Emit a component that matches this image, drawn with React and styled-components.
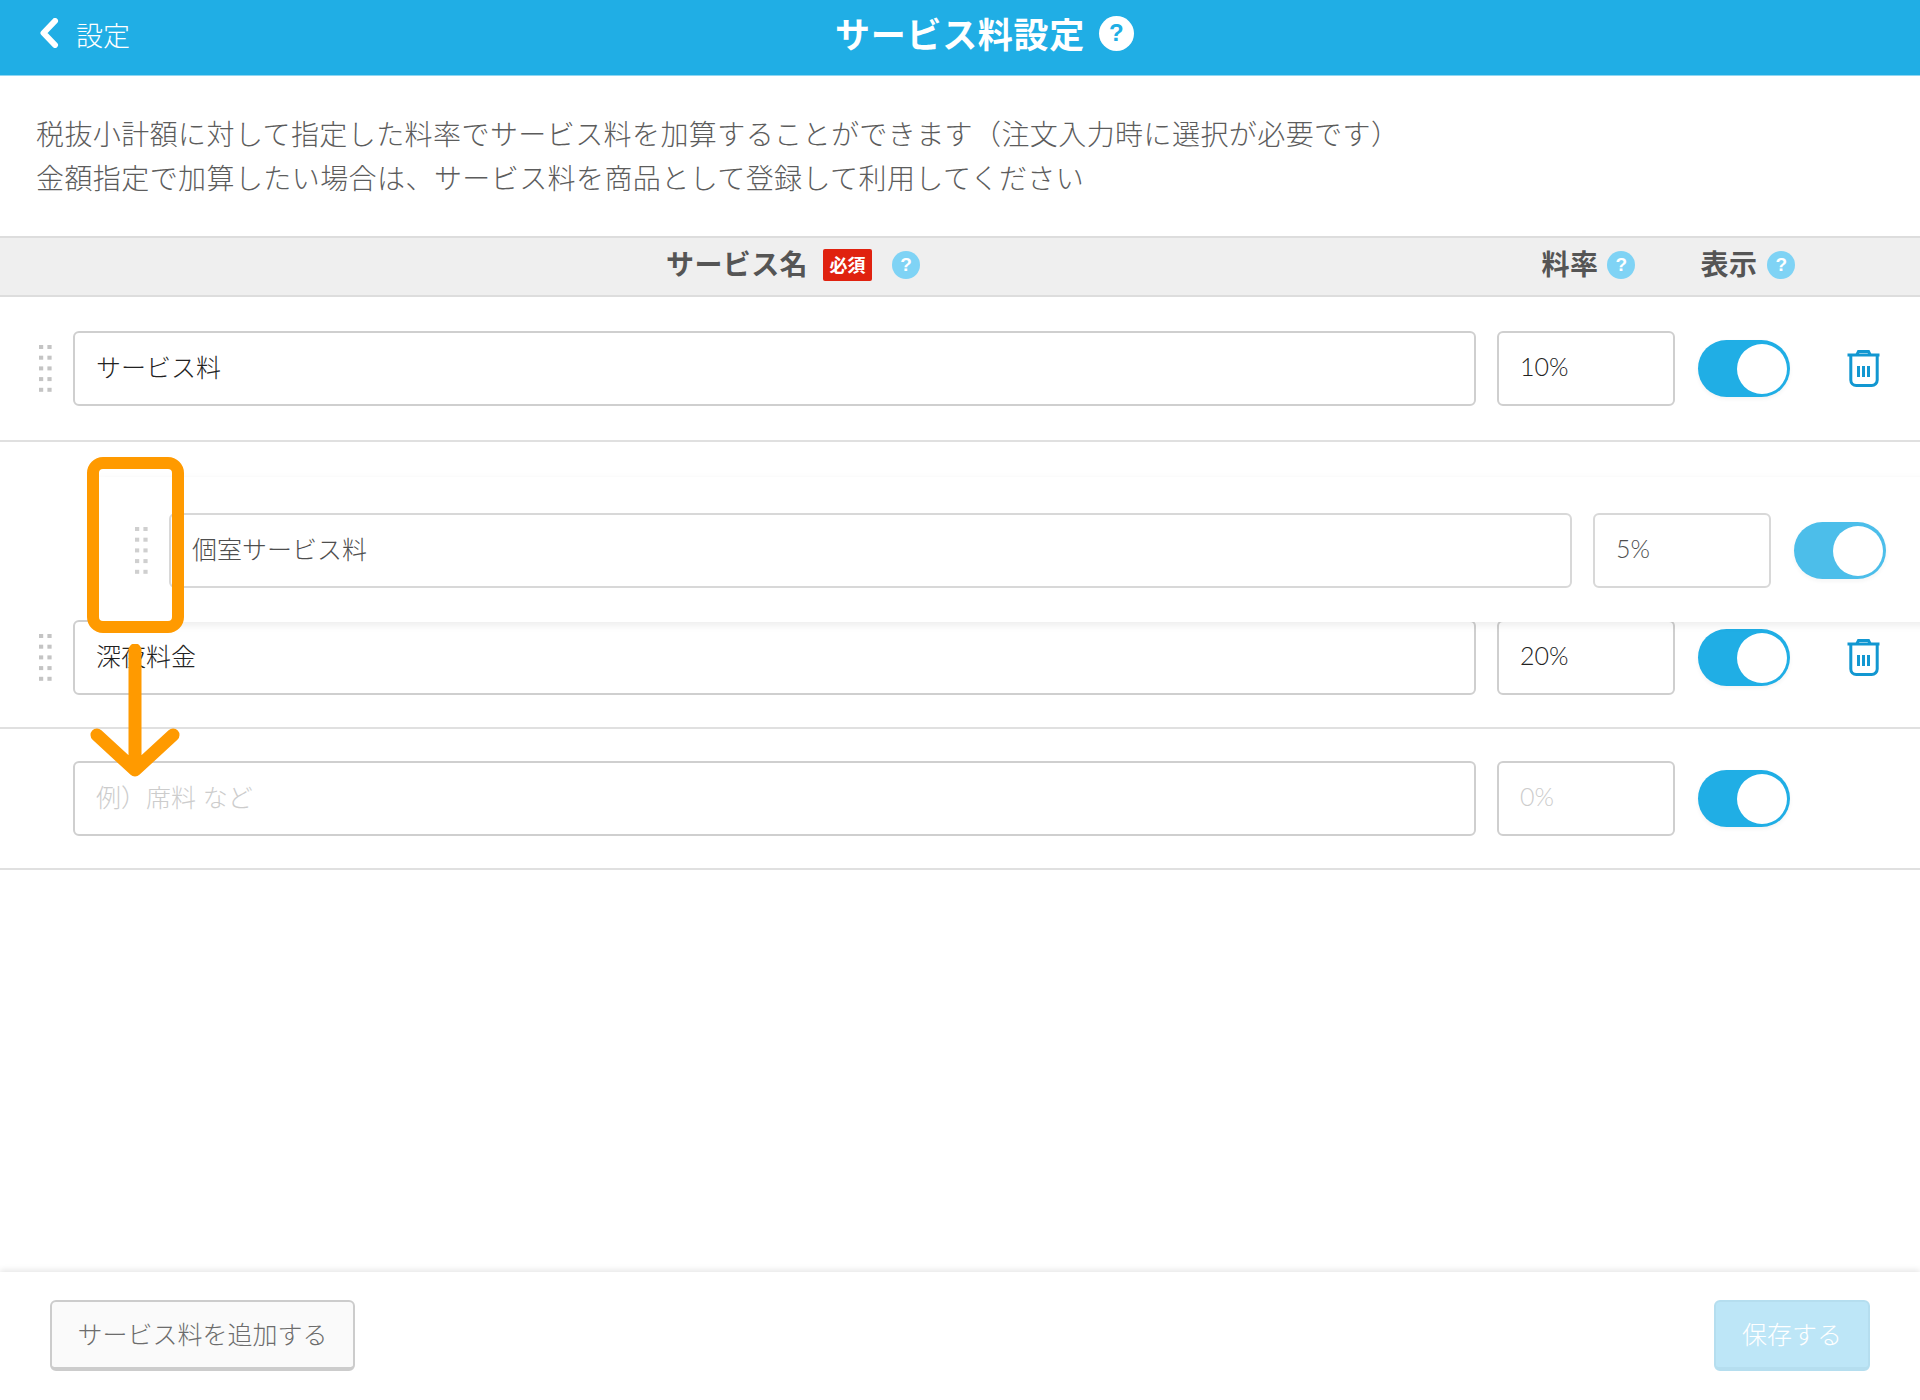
import React from 'react'
import styled, { createGlobalStyle } from 'styled-components'

const FONT = `"Noto Sans CJK JP", sans-serif`
const NUM_FONT = `Lato, "Noto Sans CJK JP", sans-serif`
const ORANGE = '#ff9a00'
const BLUE = '#20aee5'

const rows = [
  { name: 'サービス料', rate: '10%' },
  { slot: true },
  { name: '深夜料金', rate: '20%' },
  { name: '例）席料 など', rate: '0%', empty: true },
]

const App = () => {
  return (
    <Page>
      <GlobalStyle />
      <Header>
        <BackLink>
          <svg width="20" height="30" viewBox="0 0 20 30" fill="none">
            <path d="M16 3 L4.5 15 L16 27" stroke="#fff" strokeWidth="6" strokeLinecap="round" strokeLinejoin="round" />
          </svg>
          <BackLabel>設定</BackLabel>
        </BackLink>
        <Title>
          サービス料設定
          <TitleHelp $size={35} $bg="#fff" $color={BLUE}>?</TitleHelp>
        </Title>
      </Header>

      <Intro>
        税抜小計額に対して指定した料率でサービス料を加算することができます（注文入力時に選択が必要です）<br />
        金額指定で加算したい場合は、サービス料を商品として登録して利用してください
      </Intro>

      <TableHead>
        <NameHead>
          <HeadLabel>サービス名</HeadLabel>
          <Required>必須</Required>
          <Help $size={28} $bg="#7fd3f5" $color="#fff" $gap={20}>?</Help>
        </NameHead>
        <RateHead>
          <HeadLabel>料率</HeadLabel>
          <Help $size={28} $bg="#7fd3f5" $color="#fff" $gap={9}>?</Help>
        </RateHead>
        <ShowHead>
          <HeadLabel>表示</HeadLabel>
          <Help $size={28} $bg="#7fd3f5" $color="#fff" $gap={10}>?</Help>
        </ShowHead>
      </TableHead>

      <List>
        {rows.map((row, i) => row.slot ? <Slot key={i} /> : (
          <Row key={i}>
            <HandleCell>{!row.empty && <DragHandle />}</HandleCell>
            <NameField $empty={row.empty}>{row.name}</NameField>
            <RateField $empty={row.empty}>{row.rate}</RateField>
            <Toggle><Knob /></Toggle>
            <TrashCell>{!row.empty && <TrashIcon />}</TrashCell>
          </Row>
        ))}

        <DraggedRow>
          <HandleCell><DragHandle /></HandleCell>
          <NameField>個室サービス料</NameField>
          <RateField>5%</RateField>
          <Toggle><Knob /></Toggle>
          <TrashCell />
        </DraggedRow>

        <DragMark />
        <DragArrow width="90" height="140" viewBox="0 0 90 140" fill="none">
          <path d="M45 6 V126 M7 91 L45 126 L83 91" stroke={ORANGE} strokeWidth="13" strokeLinecap="round" strokeLinejoin="round" />
        </DragArrow>
      </List>

      <Footer>
        <AddButton>サービス料を追加する</AddButton>
        <SaveButton>保存する</SaveButton>
      </Footer>
    </Page>
  )
}

const DragHandle = () => (
  <svg width="13" height="47" viewBox="0 0 13 47" fill="#c4c4c4">
    {[0, 10.7, 21.4, 32.1, 42.8].map(y => (
      <g key={y}>
        <rect x="0" y={y} width="4.2" height="4" />
        <rect x="8.4" y={y} width="4.2" height="4" />
      </g>
    ))}
  </svg>
)

const TrashIcon = () => (
  <svg width="33" height="37" viewBox="0 0 33 37" fill="none" stroke="#1297d1" strokeWidth="3">
    <path d="M0.5 5 H32.5" />
    <path d="M10 4.5 L11.5 1.5 H21.5 L23 4.5" />
    <path d="M3.8 5 V30 a5.5 5.5 0 0 0 5.5 5.5 H24.7 a5.5 5.5 0 0 0 5.5 -5.5 V5" />
    <path d="M11.5 16 V27 M16.5 16 V27 M21.5 16 V27" />
  </svg>
)

const GlobalStyle = createGlobalStyle`
  html, body {
    margin: 0;
    padding: 0;
    background: #fff;
    overflow-x: hidden;
  }
  * {
    box-sizing: border-box;
  }
`

const Page = styled.div`
  display: flex;
  flex-direction: column;
  min-height: 1400px;
  font-family: ${FONT};
  overflow: hidden;
`

const Header = styled.header`
  position: relative;
  display: flex;
  align-items: center;
  justify-content: center;
  height: 76px;
  padding-bottom: 10px;
  background: ${BLUE};
  border-bottom: 1px solid #8fd6f2;
  color: #fff;
`

const BackLink = styled.div`
  position: absolute;
  left: 39px;
  top: 13px;
  display: flex;
  align-items: center;
  gap: 17px;
`

const BackLabel = styled.span`
  font-size: 27px;
  font-weight: 300;
  line-height: 34px;
  padding-top: 5px;
`

const Title = styled.h1`
  position: relative;
  margin: 0;
  font-size: 35px;
  font-weight: 700;
  line-height: 50px;
  letter-spacing: .7px;
`

const Help = styled.span`
  display: inline-flex;
  align-items: center;
  justify-content: center;
  flex: none;
  width: ${props => props.$size}px;
  height: ${props => props.$size}px;
  margin-left: ${props => props.$gap || 0}px;
  border-radius: 50%;
  background: ${props => props.$bg};
  color: ${props => props.$color};
  font-family: "Liberation Sans", sans-serif;
  font-size: ${props => Math.round(props.$size * 0.68)}px;
  font-weight: 700;
  line-height: 1;
  letter-spacing: 0;
`

const TitleHelp = styled(Help)`
  position: absolute;
  left: calc(100% + 14px);
  top: 8px;
`

const Intro = styled.p`
  margin: 0;
  height: 160px;
  padding: 35px 36px 0;
  color: #5c5c5c;
  font-size: 28px;
  font-weight: 300;
  line-height: 44px;
  letter-spacing: .42px;
`

const TableHead = styled.div`
  display: flex;
  align-items: center;
  height: 61px;
  padding: 0 130px 4px 73px;
  background: #efefef;
  border-top: 2px solid #ddd;
  border-bottom: 2px solid #ddd;
`

const NameHead = styled.div`
  flex: 1;
  display: flex;
  align-items: center;
  justify-content: center;
  padding-left: 38px;
`

const RateHead = styled.div`
  display: flex;
  align-items: center;
  justify-content: center;
  width: 177px;
  margin-left: 22px;
  padding-left: 6px;
`

const ShowHead = styled.div`
  display: flex;
  align-items: center;
  justify-content: center;
  width: 92px;
  margin-left: 24px;
  padding-left: 8px;
  white-space: nowrap;
`

const HeadLabel = styled.span`
  padding-bottom: 4px;
  color: #555;
  font-size: 28px;
  font-weight: 700;
  line-height: 40px;
  letter-spacing: .4px;
`

const Required = styled.span`
  display: flex;
  align-items: center;
  justify-content: center;
  width: 49px;
  height: 32px;
  margin-left: 15px;
  padding-bottom: 2px;
  border-radius: 2px;
  background: #e0220f;
  color: #fff;
  font-size: 18px;
  font-weight: 700;
`

const List = styled.main`
  position: relative;
  flex: 1;
`

const Row = styled.div`
  display: flex;
  align-items: center;
  padding: 33px 0 32px 39px;
  background: #fff;
  border-bottom: 2px solid #e0e0e0;

  &:first-child {
    padding-top: 34px;
    padding-bottom: 34px;
  }

  &:nth-child(4) {
    padding-top: 32px;
  }
`

const Slot = styled.div`
  height: 145px;
`

const DraggedRow = styled(Row)`
  position: absolute;
  left: 96px;
  top: 180px;
  width: 1920px;
  height: 145px;
  padding: 36px 0 34px 39px;
  border-bottom: 0;
  box-shadow: 0 3px 8px rgba(0, 0, 0, .08);

  & > * {
    opacity: .8;
  }
`

const HandleCell = styled.div`
  display: flex;
  flex: none;
  width: 34px;
`

const Field = styled.div`
  display: flex;
  align-items: center;
  height: 75px;
  padding: 0 0 6px 21px;
  background: #fff;
  border: 2px solid #cfcfcf;
  border-radius: 6px;
  color: ${props => props.$empty ? '#ccc' : '#222'};
  font-family: ${NUM_FONT};
  font-size: 25px;
  font-weight: 300;
  white-space: nowrap;
`

const NameField = styled(Field)`
  flex: 1;
`

const RateField = styled(Field)`
  flex: none;
  width: 178px;
  margin-left: 21px;
`

const Toggle = styled.div`
  display: flex;
  align-items: center;
  justify-content: flex-end;
  flex: none;
  width: 92px;
  height: 57px;
  margin-left: 23px;
  padding-right: 3px;
  border-radius: 29px;
  background: ${BLUE};
  box-shadow: 0 2px 4px rgba(0, 0, 0, .05);
`

const Knob = styled.div`
  width: 50px;
  height: 50px;
  border-radius: 50%;
  background: #fff;
`

const TrashCell = styled.div`
  display: flex;
  flex: none;
  width: 130px;
  padding-left: 57px;
`

const DragMark = styled.div`
  position: absolute;
  left: 87px;
  top: 160px;
  width: 97px;
  height: 176px;
  border: 12px solid ${ORANGE};
  border-radius: 16px;
`

const DragArrow = styled.svg`
  position: absolute;
  left: 90px;
  top: 347px;
`

const Footer = styled.footer`
  position: relative;
  display: flex;
  justify-content: space-between;
  height: 128px;
  padding: 28px 50px;
  background: #fff;
  box-shadow: 0 -2px 6px rgba(0, 0, 0, .1);
`

const AddButton = styled.button`
  width: 305px;
  height: 71px;
  padding: 0 0 4px;
  background: #fafafa;
  border: 2px solid #ccc;
  border-bottom-width: 4px;
  border-radius: 6px;
  color: #6c6c6c;
  font-family: ${FONT};
  font-size: 25px;
  font-weight: 300;
`

const SaveButton = styled(AddButton)`
  width: 156px;
  background: #bde6f7;
  border-color: #b5deef;
  color: #fff;
`

export default App
